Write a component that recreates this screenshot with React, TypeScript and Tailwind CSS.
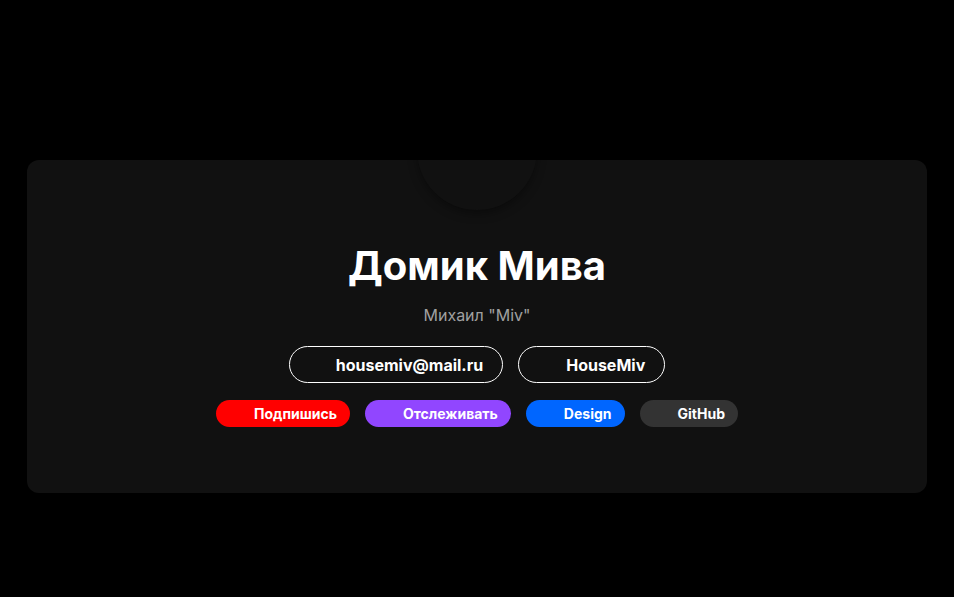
export default function App() {
  const links = [
    { label: 'Подпишись', color: 'bg-[#ff0000]' },
    { label: 'Отслеживать', color: 'bg-[#9146ff]' },
    { label: 'Design', color: 'bg-[#0066ff]' },
    { label: 'GitHub', color: 'bg-[#333333]' },
  ];

  return (
    <div
      className="min-h-[597px] bg-black pt-[160px] px-[27px]"
      style={{ fontFamily: 'Inter, "Noto Sans", sans-serif' }}
    >
      <div className="bg-[#111111] rounded-xl overflow-hidden h-[333px] flex flex-col items-center">
        {/* avatar, image missing */}
        <div className="w-[120px] h-[120px] -mt-[70px] rounded-full bg-[#111111] shadow-[0_4px_10px_rgba(0,0,0,0.35)] shrink-0" />

        <h1 className="mt-[32px] text-[40px] leading-[48px] font-bold text-white">Домик Мива</h1>
        <p className="mt-[15px] text-[16px] leading-[20px] text-[#a0a0a0]">Михаил "Miv"</p>

        <div className="mt-[21px] flex gap-[15px]">
          <a className="h-[37px] flex items-center pl-[46px] pr-[19px] border border-white rounded-full text-white text-[16px] font-bold">
            housemiv@mail.ru
          </a>
          <a className="h-[37px] flex items-center pl-[47px] pr-[19px] border border-white rounded-full text-white text-[16px] font-bold">
            HouseMiv
          </a>
        </div>

        <div className="mt-[17px] flex gap-[15px]">
          {links.map((l) => (
            <a
              key={l.label}
              className={`${l.color} h-[27px] flex items-center pl-[38px] pr-[13px] rounded-full text-white text-[14px] font-bold`}
            >
              {l.label}
            </a>
          ))}
        </div>
      </div>
    </div>
  );
}
